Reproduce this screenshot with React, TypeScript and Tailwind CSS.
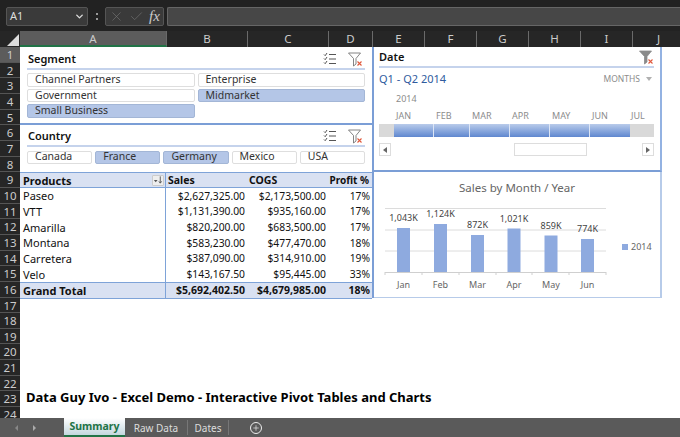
import { ChevronDown, Check, X, Plus } from 'lucide-react';

const columns = [
  { label: 'A', width: 'w-[147px]', active: true },
  { label: 'B', width: 'w-[81px]' },
  { label: 'C', width: 'w-[81px]' },
  { label: 'D', width: 'w-[44px]' },
  { label: 'E', width: 'w-[52px]' },
  { label: 'F', width: 'w-[52px]' },
  { label: 'G', width: 'w-[52px]' },
  { label: 'H', width: 'w-[52px]' },
  { label: 'I', width: 'w-[52px]' },
  { label: 'J', width: 'w-[52px]' },
];

const rows = Array.from({ length: 24 }, (_, i) => i + 1);

const products = [
  ['Paseo', '$2,627,325.00', '$2,173,500.00', '17%'],
  ['VTT', '$1,131,390.00', '$935,160.00', '17%'],
  ['Amarilla', '$820,200.00', '$683,500.00', '17%'],
  ['Montana', '$583,230.00', '$477,470.00', '18%'],
  ['Carretera', '$387,090.00', '$314,910.00', '19%'],
  ['Velo', '$143,167.50', '$95,445.00', '33%'],
];

const months = [
  { label: 'JAN', width: 'w-[40px]' },
  { label: 'FEB', width: 'w-[36px]' },
  { label: 'MAR', width: 'w-[40px]' },
  { label: 'APR', width: 'w-[40px]' },
  { label: 'MAY', width: 'w-[40px]' },
  { label: 'JUN', width: 'w-[40px]' },
];

const bars = [
  { month: 'Jan', label: '1,043K', x: 397, top: 228 },
  { month: 'Feb', label: '1,124K', x: 434, top: 224 },
  { month: 'Mar', label: '872K', x: 471, top: 235 },
  { month: 'Apr', label: '1,021K', x: 507.5, top: 228.5 },
  { month: 'May', label: '859K', x: 544.5, top: 235.5 },
  { month: 'Jun', label: '774K', x: 581, top: 239 },
];

function MultiSelectIcon() {
  return (
    <svg width="14" height="14" viewBox="0 0 14 14" fill="none" stroke="#555" strokeWidth="1">
      <path d="M1 2.500l1.200 1.200L4 1M1 6.500l1.200 1.200L4 5M1 10.500l1.200 1.200L4 9" />
      <path d="M6 2.500h7M6 7h7M6 11.500h7" />
    </svg>
  );
}

function ClearFilterIcon({ filled }: { filled?: boolean }) {
  return (
    <svg width="15" height="15" viewBox="0 0 15 15" fill={filled ? '#8a8a8a' : 'none'} stroke={filled ? '#8a8a8a' : '#666'} strokeWidth="0.8">
      <path d="M.5 1h12L8 6.500V12L5.500 14V6.500z" />
      <path d="M9.500 9.500l4 4M13.500 9.500l-4 4" stroke="#e0583c" strokeWidth="1.100" />
    </svg>
  );
}

function SortIcon() {
  return (
    <svg width="11" height="10" viewBox="0 0 11 10" fill="none">
      <path d="M1 5h4L3 7.500z" fill="#555" />
      <path d="M8 1v7M6.500 6.500L8 8.500l1.500-2" stroke="#444" strokeWidth="0.9" />
    </svg>
  );
}

function SlicerHeader({ title }: { title: string }) {
  return (
    <div className="flex h-[20px] items-center justify-between border-b-2 border-[#c5d3ec]">
      <span className="pl-[1px] text-[11px] font-semibold text-[#111]">{title}</span>
      <div className="flex items-center gap-[11px] pr-[2px]">
        <MultiSelectIcon />
        <ClearFilterIcon />
      </div>
    </div>
  );
}

function SlicerItem({ label, selected }: { label: string; selected?: boolean }) {
  return (
    <div
      className={`flex h-[13.500px] items-center rounded-[2px] border pl-[7px] text-[10.500px] text-[#333] ${
        selected ? 'border-[#a3b6d6] bg-[#b4c6e7]' : 'border-[#dedede] bg-white'
      }`}
    >
      {label}
    </div>
  );
}

function SegmentSlicer() {
  return (
    <div className="h-[78px] border-b-2 border-[#7b9ed6] bg-white px-[7px] pt-[3px]">
      <SlicerHeader title="Segment" />
      <div className="mt-[3px] grid grid-cols-2 gap-x-[3px] gap-y-[2.200px]">
        <SlicerItem label="Channel Partners" />
        <SlicerItem label="Enterprise" />
        <SlicerItem label="Government" />
        <SlicerItem label="Midmarket" selected />
        <SlicerItem label="Small Business" selected />
      </div>
    </div>
  );
}

function CountrySlicer() {
  return (
    <div className="h-[47px] bg-white px-[7px] pt-[2px]">
      <SlicerHeader title="Country" />
      <div className="mt-[3.500px] grid grid-cols-5 gap-x-[3px]">
        <SlicerItem label="Canada" />
        <SlicerItem label="France" selected />
        <SlicerItem label="Germany" selected />
        <SlicerItem label="Mexico" />
        <SlicerItem label="USA" />
      </div>
    </div>
  );
}

function PivotRow({ cells, total }: { cells: string[]; total?: boolean }) {
  return (
    <div
      className={`flex items-center leading-none text-[#111] ${
        total ? 'h-[15px] bg-[#d9e1f2] text-[10.500px] font-bold' : 'h-[15.670px] text-[10.300px]'
      }`}
    >
      <div className="flex h-full w-[146px] items-center truncate border-r border-[#7ea3d8] pl-[3px] text-[11px]">{cells[0]}</div>
      <div className="flex h-full w-[81px] items-center justify-end pr-[2px]">{cells[1]}</div>
      <div className="flex h-full w-[81px] items-center justify-end pr-[2px]">{cells[2]}</div>
      <div className="flex h-full w-[44px] items-center justify-end pr-[2px]">{cells[3]}</div>
    </div>
  );
}

function PivotTable() {
  return (
    <div className="h-[126px] border-t border-[#7ea3d8] bg-white">
      <div className="flex h-[15px] items-center border-b border-[#7ea3d8] bg-[#d9e1f2] text-[10.500px] font-bold leading-none text-[#111]">
        <div className="flex h-full w-[146px] items-center justify-between border-r border-[#7ea3d8] pl-[3px] pr-[1px]">
          <span className="text-[11px]">Products</span>
          <span className="flex h-[11px] w-[12px] items-center justify-center rounded-[1px] border border-[#ccc] bg-[#eee]">
            <SortIcon />
          </span>
        </div>
        <div className="w-[81px] pl-[2px]">Sales</div>
        <div className="w-[81px] pl-[2px]">COGS</div>
        <div className="w-[44px] whitespace-nowrap pr-[3px] text-right text-[10px]">Profit %</div>
      </div>
      {products.map((row) => (
        <PivotRow key={row[0]} cells={row} />
      ))}
      <div className="border-y border-[#7ea3d8]">
        <PivotRow cells={['Grand Total', '$5,692,402.50', '$4,679,985.00', '18%']} total />
      </div>
    </div>
  );
}

function DateTimeline() {
  return (
    <div className="flex h-[125px] flex-col border-b-2 border-r-2 border-b-[#7b9ed6] border-r-[#93b2e2] bg-white pl-[5px] pr-[6px] pt-[2px]">
      <div className="flex h-[19px] items-center justify-between border-b-2 border-[#c5d3ec]">
        <span className="text-[11px] font-semibold text-[#111]">Date</span>
        <ClearFilterIcon filled />
      </div>
      <div className="mt-[3px] flex h-[16px] items-center justify-between">
        <span className="text-[11px] text-[#2f5c9e]">Q1 - Q2 2014</span>
        <span className="flex items-center gap-[6px] pr-[2px] text-[8.500px] text-[#8c8c8c]">
          MONTHS
          <span className="h-0 w-0 border-x-[3.500px] border-t-[4px] border-x-transparent border-t-[#b0b0b0]" />
        </span>
      </div>
      <div className="mt-[4px] h-[15px] pl-[17px] text-[9px] leading-[15px] text-[#8c8c8c]">2014</div>
      <div className="mt-[2px] flex h-[15px] pl-[15px] text-[9px] leading-[15px] text-[#8c8c8c]">
        {months.map((m) => (
          <div key={m.label} className={`${m.width} pl-[2px]`}>
            {m.label}
          </div>
        ))}
        <div className="pl-[1px]">JUL</div>
      </div>
      <div className="mt-[1px] flex h-[13px] bg-[#d9d9d9] pl-[15px]">
        {months.map((m) => (
          <div
            key={m.label}
            className={`${m.width} border-r border-[#dce5f5] bg-gradient-to-b from-[#b9cbea] to-[#5f87cf] last:border-r-0`}
          />
        ))}
      </div>
      <div className="mt-[6px] flex h-[13px] items-center justify-between">
        <div className="flex h-[13px] w-[12px] items-center justify-center border border-[#ddd] bg-white">
          <span className="h-0 w-0 border-y-[3.500px] border-r-[4px] border-y-transparent border-r-[#666]" />
        </div>
        <div className="ml-[123px] h-[13px] w-[73px] border border-[#ddd] bg-white" />
        <div className="ml-auto flex h-[13px] w-[12px] items-center justify-center border border-[#ddd] bg-white">
          <span className="h-0 w-0 border-y-[3.500px] border-l-[4px] border-y-transparent border-l-[#666]" />
        </div>
      </div>
    </div>
  );
}

function SalesChart() {
  return (
    <div className="h-[126px] border-b border-r-2 border-b-[#b7cbe9] border-r-[#b7cbe9] bg-white">
      <svg width="286" height="125" viewBox="374 172 286 125" fontFamily="'Noto Sans', sans-serif">
        <text x="517" y="192" textAnchor="middle" fontSize="11.500" fill="#666">
          Sales by Month / Year
        </text>
        {[208.5, 230, 251].map((y) => (
          <line key={y} x1="385" x2="606" y1={y} y2={y} stroke="#dcdcdc" />
        ))}
        <line x1="385" x2="606" y1="272.500" y2="272.500" stroke="#cfcfcf" />
        {[385, 422, 459, 496, 532, 569, 606].map((x) => (
          <line key={x} x1={x} x2={x} y1="272" y2="275" stroke="#cfcfcf" />
        ))}
        {bars.map((b) => (
          <g key={b.month}>
            <rect x={b.x} y={b.top} width="13" height={272 - b.top} fill="#8eaadf" />
            <text x={b.x + 6.5} y={b.top - 7} textAnchor="middle" fontSize="9" fill="#444">
              {b.label}
            </text>
            <text x={b.x + 6.5} y="288" textAnchor="middle" fontSize="9" fill="#666">
              {b.month}
            </text>
          </g>
        ))}
        <rect x="622" y="244" width="6" height="6" fill="#8eaadf" />
        <text x="631" y="250" fontSize="9" fill="#666">
          2014
        </text>
      </svg>
    </div>
  );
}

function TopBar() {
  return (
    <div className="h-[31px] bg-[#222] pt-[7px]">
      <div className="flex h-[19px] items-stretch">
        <div className="ml-[6px] flex w-[82px] items-center justify-between rounded-[2px] border border-[#555] bg-[#3a3a3a] pl-[3px] pr-[2px] text-[11px] text-[#ddd]">
          A1
          <ChevronDown size={11} strokeWidth={3} color="#ddd" />
        </div>
        <div className="flex w-[17px] flex-col items-center justify-center gap-[3px]">
          <span className="h-[2px] w-[2px] bg-[#999]" />
          <span className="h-[2px] w-[2px] bg-[#999]" />
        </div>
        <div className="flex w-[59px] items-center gap-[5px] rounded-[2px] border border-[#555] bg-[#3a3a3a] pl-[3px]">
          <X size={15} strokeWidth={1} color="#777" />
          <Check size={15} strokeWidth={1} color="#777" />
          <span className="text-[15px] italic text-[#ccc] [font-family:'Liberation_Serif',serif]">fx</span>
        </div>
        <div className="ml-[3px] flex-1 rounded-l-[2px] border-y border-l border-[#666] bg-[#474747]" />
      </div>
    </div>
  );
}

function ColumnHeaders() {
  return (
    <div className="flex h-[16px] overflow-hidden bg-[#262626] text-[11.500px] leading-[16px] text-[#ccc]">
      <div className="relative w-[20px] shrink-0">
        <span className="absolute bottom-[1px] right-[1px] h-0 w-0 border-b-[12px] border-l-[12px] border-b-[#ddd] border-l-transparent" />
      </div>
      {columns.map((c) => (
        <div
          key={c.label}
          className={`${c.width} shrink-0 border-r border-[#6a6a6a] text-center ${
            c.active ? 'border-b-2 border-b-[#217346] bg-[#5c5c5c]' : ''
          }`}
        >
          {c.label}
        </div>
      ))}
    </div>
  );
}

function SheetTabs() {
  return (
    <div className="flex h-[19px] items-stretch bg-[#5a5a5a] text-[10.500px] leading-none">
      <div className="flex w-[64px] items-center gap-[15px] pl-[15px]">
        <span className="h-0 w-0 border-y-[3px] border-r-[3px] border-y-transparent border-r-[#888]" />
        <span className="h-0 w-0 border-y-[3px] border-l-[3px] border-y-transparent border-l-[#aaa]" />
      </div>
      <div className="flex w-[61px] items-center justify-center border-b-2 border-[#217346] bg-gradient-to-b from-white to-[#c3d7de] font-bold text-[#217346]">
        Summary
      </div>
      <div className="my-[2px] flex w-[63px] items-center justify-center border-r border-[#777] text-[10px] text-[#ddd]">Raw Data</div>
      <div className="my-[2px] flex w-[41px] items-center justify-center border-r border-[#777] text-[10px] text-[#ddd]">Dates</div>
      <div className="ml-[21px] flex items-center">
        <span className="flex h-[12px] w-[12px] items-center justify-center rounded-full border border-[#eee]">
          <Plus size={8} strokeWidth={2} color="#eee" />
        </span>
      </div>
    </div>
  );
}

export default function App() {
  return (
    <div className="flex h-[437px] w-[680px] flex-col overflow-hidden bg-white [font-family:'Noto_Sans',sans-serif]">
      <TopBar />
      <ColumnHeaders />
      <div className="flex h-[371px] overflow-hidden">
        <div className="w-[20px] shrink-0 bg-[#262626] text-center text-[11.500px] text-[#ccc]">
          {rows.map((r) => (
            <div
              key={r}
              className={`h-[15.670px] border-b border-[#555] leading-[16px] ${r === 1 ? 'bg-[#5c5c5c]' : ''}`}
            >
              {r}
            </div>
          ))}
        </div>
        <div className="flex-1 bg-white">
          <div className="flex items-start">
            <div className="w-[354px] border-r-2 border-[#7b9ed6]">
              <SegmentSlicer />
              <CountrySlicer />
              <PivotTable />
            </div>
            <div className="w-[288px]">
              <DateTimeline />
              <SalesChart />
            </div>
          </div>
          <div className="mt-[91px] pl-[6px] text-[13px] font-bold leading-[16px] text-black">
            Data Guy Ivo - Excel Demo - Interactive Pivot Tables and Charts
          </div>
        </div>
      </div>
      <SheetTabs />
    </div>
  );
}
